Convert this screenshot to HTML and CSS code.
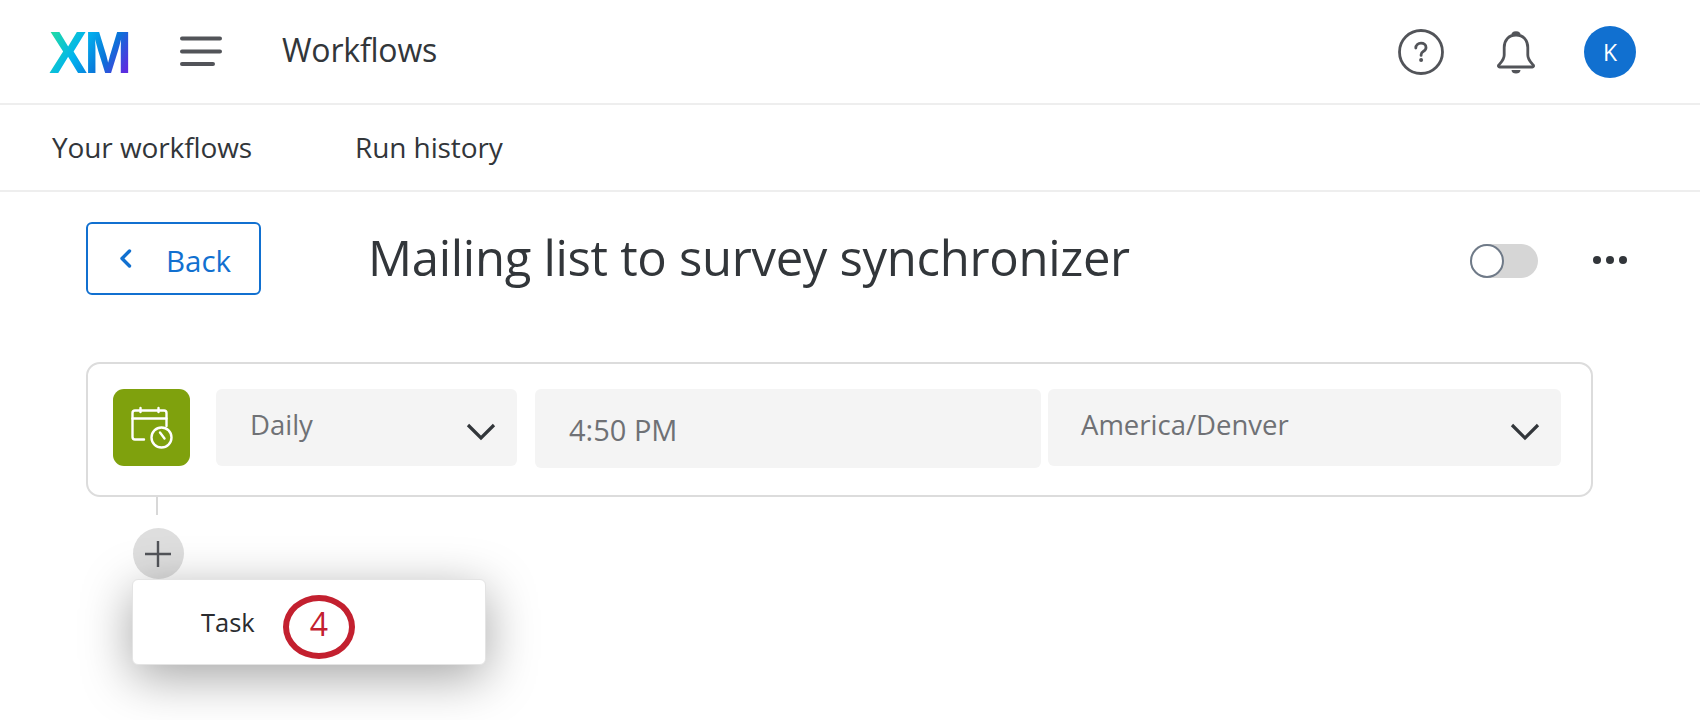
FILE: index.html
```html
<!DOCTYPE html>
<html lang="en">
<head>
<meta charset="utf-8">
<title>Workflows</title>
<link rel="stylesheet" href="styles.css">
</head>
<body>
<div class="page">
  <header class="topbar">
    <svg class="logo" width="80" height="43" viewBox="0 0 80 43" role="img" aria-label="XM">
      <defs>
        <linearGradient id="xmGrad" gradientUnits="userSpaceOnUse" x1="4" y1="0" x2="76" y2="46">
          <stop offset="0" stop-color="#21dba4"/>
          <stop offset=".38" stop-color="#00b4ef"/>
          <stop offset=".72" stop-color="#0b72d8"/>
          <stop offset="1" stop-color="#5b2de0"/>
        </linearGradient>
      </defs>
      <text class="logo-text" x="0" y="43" transform="scale(.955 1)" fill="url(#xmGrad)">XM</text>
    </svg>
    <svg class="burger" width="42" height="30" viewBox="0 0 42 30" aria-hidden="true">
      <path d="M2 2.500H40M2 15.500H40M2 28H33" fill="none" stroke="#525459" stroke-width="4" stroke-linecap="round"/>
    </svg>
    <h1 class="app-name">Workflows</h1>
    <div class="top-actions">
      <svg class="icon-help" width="46" height="46" viewBox="0 0 46 46" aria-hidden="true">
        <circle cx="23" cy="23" r="21.500" fill="none" stroke="#525459" stroke-width="2.800"/>
        <path d="M17.800 19c0-3 2.300-4.800 5.200-4.800 2.900 0 5 1.700 5 4.200 0 1.900-1 2.900-2.500 3.800-1.600 1-2.400 1.700-2.400 3.500v.7" fill="none" stroke="#525459" stroke-width="2.800" stroke-linecap="round"/>
        <circle cx="23.100" cy="31" r="2" fill="#525459"/>
      </svg>
      <svg class="icon-bell" width="40" height="44" viewBox="0 0 40 44" aria-hidden="true">
        <path d="M20 4c-7.500 0-11.800 5.600-11.800 12.500v7.500c0 4.500-2.400 6.500-5.500 10.200-.6.800-.1 1.800.9 1.800h32.800c1 0 1.500-1 .9-1.800-3.100-3.700-5.500-5.700-5.500-10.200v-7.500C31.800 9.600 27.500 4 20 4z" fill="none" stroke="#525459" stroke-width="2.800" stroke-linejoin="round"/>
        <path d="M17 2.800c1.500-1.400 4.500-1.400 6 0" fill="none" stroke="#525459" stroke-width="2.800" stroke-linecap="round"/>
        <path d="M15.500 39h9c0 2.500-2 3.500-4.500 3.500s-4.500-1-4.500-3.500z" fill="#525459"/>
      </svg>
      <div class="avatar">K</div>
    </div>
  </header>

  <nav class="tabs">
    <a class="tab">Your workflows</a>
    <a class="tab">Run history</a>
  </nav>

  <main class="content">
    <div class="toolbar">
      <button class="back" type="button">
        <svg width="15" height="21" viewBox="0 0 15 21" aria-hidden="true">
          <path d="M11.500 3L4 10.500 11.500 18" fill="none" stroke="#1170d0" stroke-width="3.400" stroke-linecap="round" stroke-linejoin="round"/>
        </svg>
        <span class="back-label">Back</span>
      </button>
      <h2 class="title">Mailing list to survey synchronizer</h2>
      <div class="toggle"><span class="knob"></span></div>
      <div class="more"><i></i><i></i><i></i></div>
    </div>

    <section class="card">
      <div class="trigger-icon">
        <svg width="46" height="46" viewBox="0 0 46 46" aria-hidden="true">
          <g fill="none" stroke="#fff" stroke-width="2.400" stroke-linecap="round" stroke-linejoin="round">
            <path d="M15 34.500H6a2.500 2.500 0 0 1-2.500-2.500V8A2.500 2.500 0 0 1 6 5.500h29A2.500 2.500 0 0 1 37.500 8V21"/>
            <path d="M3.500 13.500h34M11.500 3v4M29.500 3v4"/>
            <circle cx="32.500" cy="32.500" r="10"/>
            <path d="M31 27.500l4.500 6"/>
          </g>
        </svg>
      </div>
      <div class="field field-freq">
        <span class="field-text">Daily</span>
        <svg class="chev" width="30" height="19" viewBox="0 0 30 19" aria-hidden="true"><path d="M2 3l13 13L28 3" fill="none" stroke="#32363a" stroke-width="3.200"/></svg>
      </div>
      <div class="field field-time"><span class="time-text">4:50 PM</span></div>
      <div class="field field-zone">
        <span class="field-text">America/Denver</span>
        <svg class="chev" width="30" height="19" viewBox="0 0 30 19" aria-hidden="true"><path d="M2 3l13 13L28 3" fill="none" stroke="#32363a" stroke-width="3.200"/></svg>
      </div>
    </section>

    <div class="connector"></div>
    <div class="add-wrap">
      <div class="add">
        <svg width="28" height="28" viewBox="0 0 28 28" aria-hidden="true"><path d="M14 1v26M1 14h26" stroke="#525459" stroke-width="2.400" fill="none"/></svg>
      </div>
      <div class="menu">
        <span class="menu-item">Task</span>
        <span class="step">4</span>
      </div>
    </div>
  </main>
</div>
</body>
</html>
```
FILE: styles.css
```css
* { box-sizing: border-box; }
html, body { margin: 0; padding: 0; height: 720px; overflow: hidden; background: #fff; }
body { font-family: "Open Sans", "Noto Sans", sans-serif; color: #32363a; }
.page { width: 1700px; height: 720px; overflow: hidden; }

.topbar { height: 105px; border-bottom: 2px solid #eeeeee; display: flex; align-items: center; padding: 0 64px 0 49px; }
.logo { flex: none; margin-top: -1px; overflow: visible; }
.logo-text { font-family: "Liberation Sans", sans-serif; font-weight: 700; font-size: 60px; letter-spacing: -3px; }
.burger { flex: none; margin-left: 51px; margin-top: -2px; }
.app-name { margin: -4px 0 0 60px; font-size: 32px; font-weight: 400; line-height: 40px; letter-spacing: -.2px; }
.top-actions { margin-left: auto; display: flex; align-items: center; }
.icon-help { margin-right: 52px; margin-left: 1px; }
.icon-bell { margin-right: 48px; margin-top: 2px; }
.avatar { width: 52px; height: 52px; border-radius: 50%; background: #1170d0; color: #fff; font-size: 23px; display: flex; align-items: center; justify-content: center; }

.tabs { height: 87px; border-bottom: 2px solid #eeeeee; display: flex; align-items: center; padding: 0 0 0 52px; gap: 103px; }
.tab { font-size: 28px; line-height: 36px; margin-top: -2px; letter-spacing: -.1px; }

.content { padding: 30px 0 0 86px; }
.toolbar { display: flex; align-items: center; height: 73px; }
.back { width: 175px; height: 73px; border: 2px solid #1170d0; border-radius: 6px; background: #fff; color: #1170d0; font: inherit; font-size: 29.500px; display: flex; align-items: center; padding: 0 0 0 30px; gap: 33px; }
.back-label { margin-top: 4px; line-height: 40px; }
.title { margin: -3px 0 0 107px; font-size: 49px; font-weight: 400; line-height: 66px; flex: 1; white-space: nowrap; letter-spacing: -.3px; }
.toggle { width: 68px; height: 34px; border-radius: 17px; background: #d6d6d6; margin-top: 5px; flex: none; }
.knob { display: block; width: 34px; height: 34px; border-radius: 50%; background: #fff; border: 2px solid #6f7a88; }
.more { display: flex; gap: 5px; margin: 2px 0 0 55px; width: 107px; flex: none; }
.more i { width: 8px; height: 8px; border-radius: 50%; background: #32363a; }

.card { margin-top: 67px; width: 1507px; height: 135px; border: 2px solid #dcdcdc; border-radius: 14px; padding: 25px 0 0 25px; display: flex; align-items: flex-start; }
.trigger-icon { width: 77px; height: 77px; border-radius: 11px; background: #7fa10d; flex: none; display: flex; align-items: center; justify-content: center; margin-right: 26px; }
.field { background: #f4f4f4; border-radius: 6px; height: 77px; display: flex; align-items: center; justify-content: space-between; flex: none; }
.field-freq { width: 301px; padding: 0 21px 0 34px; margin-right: 18px; }
.field-time { width: 506px; height: 79px; padding: 0 0 0 34px; margin-right: 7px; }
.field-zone { width: 513px; padding: 0 21px 0 33px; }
.field-text { font-size: 27.500px; line-height: 36px; color: #6f7175; margin-top: -6px; }
.time-text { font-size: 29px; line-height: 36px; color: #6f7175; margin-top: 2px; }
.chev { flex: none; margin-top: 8px; }

.connector { width: 2px; height: 18px; background: #d8d8d8; margin-left: 70px; }
.add-wrap { position: relative; margin-top: 13px; margin-left: 47px; }
.add { width: 51px; height: 51px; border-radius: 50%; background: #dedede; display: flex; align-items: center; justify-content: center; padding-right: 2px; }
.menu { position: absolute; left: -1px; top: 51px; width: 354px; height: 86px; border-radius: 6px; background: #fff; border: 1px solid #e4e4e4; box-shadow: 0 12px 50px rgba(0,0,0,.36); display: flex; align-items: center; padding-left: 68px; }
.menu-item { font-size: 25.500px; line-height: 34px; color: #2a2c30; margin-top: -1px; }
.step { position: absolute; left: 150px; top: 15px; width: 72px; height: 64px; border: 6px solid #c3202f; border-radius: 50%; color: #c3202f; font-size: 32px; line-height: 1; padding-bottom: 6px; display: flex; align-items: center; justify-content: center; }
```
